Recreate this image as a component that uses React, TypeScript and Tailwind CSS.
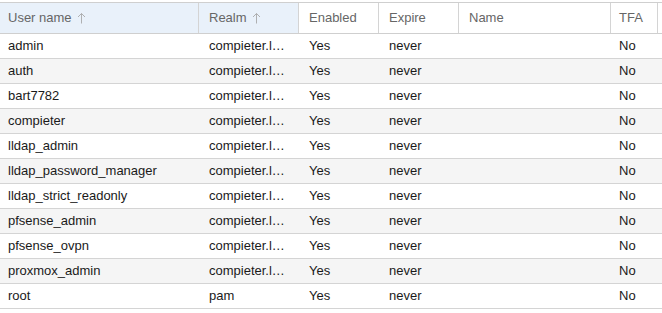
const users = [
  ["admin", "compieter.l…"],
  ["auth", "compieter.l…"],
  ["bart7782", "compieter.l…"],
  ["compieter", "compieter.l…"],
  ["lldap_admin", "compieter.l…"],
  ["lldap_password_manager", "compieter.l…"],
  ["lldap_strict_readonly", "compieter.l…"],
  ["pfsense_admin", "compieter.l…"],
  ["pfsense_ovpn", "compieter.l…"],
  ["proxmox_admin", "compieter.l…"],
  ["root", "pam"],
];

function SortArrow() {
  return (
    <svg width="9" height="12" viewBox="0 0 9 12" className="ml-[5px] inline-block">
      <path d="M4.5 1.5V11.5M1 5L4.5 1.5L8 5" stroke="#a8a8a8" strokeWidth="0.9" fill="none" />
    </svg>
  );
}

export default function App() {
  const cols = ["w-[198px]", "w-[100px]", "w-[80px]", "w-[80px]", "w-[152px]", "w-[48px]"];
  return (
    <div
      className="w-[662px] h-[313px] bg-white text-[13px] text-[#1a1a1a] overflow-hidden"
      style={{ fontFamily: '"Liberation Sans", Arial, sans-serif' }}
    >
      <div className="mt-[2px] flex h-[32px] border-y border-[#cfcfcf] text-[#666]">
        <div className={`${cols[0]} flex items-center bg-[#e9f1fa] pl-2`}>
          User name
          <SortArrow />
        </div>
        <div className={`${cols[1]} flex items-center border-l border-[#d4d4d4] bg-[#e9f1fa] pl-[10px]`}>
          Realm
          <SortArrow />
        </div>
        <div className={`${cols[2]} flex items-center border-l border-[#d4d4d4] pl-[10px]`}>Enabled</div>
        <div className={`${cols[3]} flex items-center border-l border-[#d4d4d4] pl-[10px]`}>Expire</div>
        <div className={`${cols[4]} flex items-center border-l border-[#d4d4d4] pl-[10px]`}>Name</div>
        <div className={`${cols[5]} flex items-center border-x border-[#d4d4d4] pl-[8px]`}>TFA</div>
      </div>
      {users.map(([name, realm], i) => (
        <div
          key={name}
          className={`flex h-[25px] items-center border-b border-[#d4d4d4] ${i % 2 === 1 ? "bg-[#f5f5f5]" : "bg-white"}`}
        >
          <div className={`${cols[0]} pl-2`}>{name}</div>
          <div className={`${cols[1]} pl-[11px]`}>{realm}</div>
          <div className={`${cols[2]} pl-[11px]`}>Yes</div>
          <div className={`${cols[3]} pl-[11px]`}>never</div>
          <div className={`${cols[4]} pl-[11px]`}></div>
          <div className={`${cols[5]} pl-[9px]`}>No</div>
        </div>
      ))}
    </div>
  );
}
